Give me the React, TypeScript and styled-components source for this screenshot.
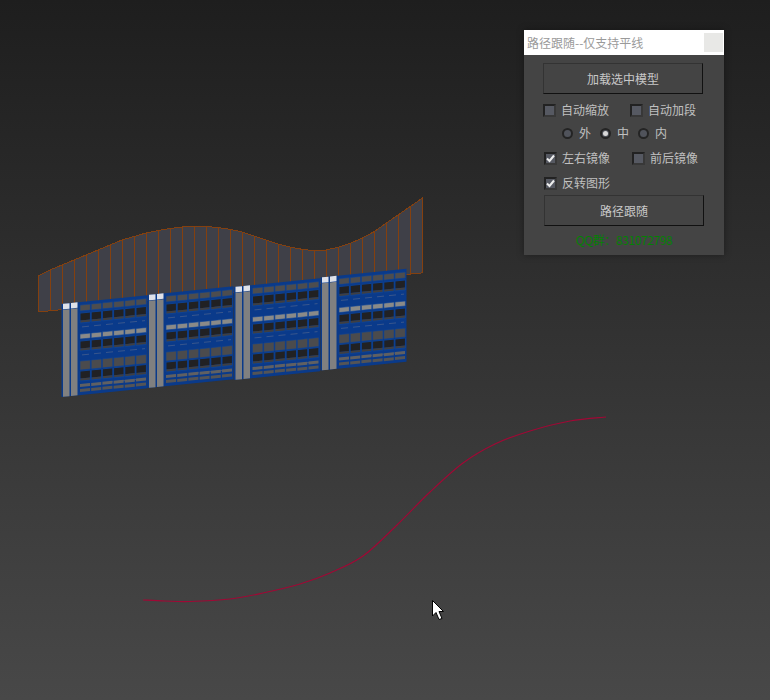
import React from 'react'
import styled, { createGlobalStyle } from 'styled-components'

const GlobalStyle = createGlobalStyle`
  html, body {
    margin: 0;
    padding: 0;
    background: #1e1e1e;
  }
`

const Viewport = styled.div`
  position: relative;
  width: 770px;
  height: 700px;
  overflow: hidden;
  background: linear-gradient(180deg, #1e1e1e 0%, #484848 100%);
  font-family: 'Noto Sans CJK SC', 'Liberation Sans', sans-serif;
`

const Scene = styled.svg`
  position: absolute;
  inset: 0;
  display: block;
`

const Dialog = styled.div`
  position: absolute;
  left: 524px;
  top: 30px;
  width: 200px;
  height: 225px;
  display: flex;
  flex-direction: column;
  background: #444444;
  box-shadow: 0 0 7px rgba(0, 0, 0, 0.35);
`

const TitleBar = styled.div`
  height: 25px;
  flex: none;
  display: flex;
  align-items: center;
  justify-content: space-between;
  padding: 0 1px 0 3px;
  background: #ffffff;
  color: #9a9a9a;
  font-size: 12px;
`

const CloseBox = styled.div`
  width: 19px;
  height: 19px;
  background: #e8e8e6;
`

const Body = styled.div`
  flex: 1;
  display: flex;
  flex-direction: column;
  padding: 8px 0 0 19px;
`

const ActionButton = styled.button<{ $offset?: number; $top?: number }>`
  width: 160px;
  height: 31px;
  margin-left: ${p => p.$offset ?? 0}px;
  margin-top: ${p => p.$top ?? 0}px;
  padding: 0;
  background: #444444;
  border: 1px solid #333333;
  border-right-color: #111111;
  border-bottom-color: #111111;
  color: #c8c8c8;
  font-family: inherit;
  font-size: 12px;
`

const OptionRow = styled.div<{ $top: number; $offset?: number }>`
  display: flex;
  align-items: center;
  height: 14px;
  margin-top: ${p => p.$top}px;
  margin-left: ${p => p.$offset ?? 0}px;
`

const CheckItem = styled.label<{ $width?: number }>`
  display: flex;
  align-items: center;
  gap: 5px;
  width: ${p => (p.$width ? `${p.$width}px` : 'auto')};
  color: #c0c0c0;
  font-size: 12px;
  line-height: 14px;
`

const CheckBox = styled.span`
  box-sizing: border-box;
  width: 13px;
  height: 13px;
  display: flex;
  align-items: center;
  justify-content: center;
  background: #565962;
  border: 2px solid #222222;
  border-right-color: #383838;
  border-bottom-color: #383838;
`

const RadioItem = styled.label`
  display: flex;
  align-items: center;
  gap: 6px;
  width: 38px;
  color: #c0c0c0;
  font-size: 12px;
  line-height: 14px;
`

const RadioDot = styled.span<{ $on?: boolean }>`
  box-sizing: border-box;
  width: 11px;
  height: 11px;
  border-radius: 50%;
  display: flex;
  align-items: center;
  justify-content: center;
  background: #50535b;
  border: 2px solid #242424;

  &::after {
    content: '';
    width: 5px;
    height: 5px;
    border-radius: 50%;
    background: ${p => (p.$on ? '#d8d8d8' : 'transparent')};
  }
`

const Contact = styled.div`
  margin-top: 6px;
  margin-left: 1px;
  height: 16px;
  line-height: 16px;
  text-align: center;
  width: 160px;
  color: #058005;
  font-size: 12px;
  letter-spacing: -0.4px;
`

// top edge of the swept wall, one y per rib, x = 38 + 12 * i
const wallTop = [
  276, 270, 265, 260, 255, 250, 245, 240, 236.5, 233, 230.5, 228.5, 227, 226.5, 226.5, 227.5,
  229.3, 232, 236, 240, 244, 247, 249.3, 250.7, 250, 247.3, 243.3, 238.3, 231.7, 223.3, 215,
  206.7, 198.3
]
const ribX = (i: number) => 38 + 12 * i
const wallBottom = (x: number) => 312 - (x - 38) * 0.1018

const wallOutline = () => {
  const top = wallTop.map((y, i) => `${ribX(i)},${y}`).join(' ')
  return `${top} 422,${wallBottom(422)} 38,312`
}

const modules = [
  { x: 61, y: 307 },
  { x: 147, y: 298 },
  { x: 233.5, y: 290 },
  { x: 320, y: 280.5 }
]
const columns = [0, 1, 2, 3, 4, 5]
const BLUE = '#0a3a8a'
const FRAME = '#0c4296'
const RIB = '#84400f'

function WindowRow({ y, band, bandY, bandH }: { y: number; band: string; bandY: number; bandH: number }) {
  return (
    <>
      {columns.map(c => (
        <g key={c}>
          <rect x={19 + c * 11.2} y={bandY} width={10.4} height={bandH} fill={band} stroke={FRAME} strokeWidth={0.6} />
          <rect x={19 + c * 11.2} y={y} width={10.4} height={7.5} fill="#212123" />
          <rect x={19 + c * 11.2} y={y + 7.5} width={10.4} height={2.5} fill="#3f3f42" />
          <rect x={19 + c * 11.2} y={y} width={10.4} height={10} fill="none" stroke={FRAME} strokeWidth={0.9} />
        </g>
      ))}
      <line x1={21} y1={y + 14} x2={84} y2={y + 14} stroke="#4a618e" strokeWidth={0.7} strokeDasharray="7 5" />
    </>
  )
}

function FacadeModule({ x, y }: { x: number; y: number }) {
  return (
    <g transform={`translate(${x} ${y}) skewY(-5.7)`}>
      <rect x={0.5} y={-3} width={86} height={93} fill={BLUE} />
      <rect x={2} y={3} width={6.5} height={87} fill="#808080" />
      <rect x={10} y={3} width={6.5} height={87} fill="#808080" />
      <rect x={2} y={-3} width={6.5} height={5.5} fill="#dfe1e8" />
      <rect x={10} y={-3} width={6.5} height={5.5} fill="#dfe1e8" />
      <WindowRow y={8} band="#4d4d4f" bandY={0} bandH={6} />
      <WindowRow y={36} band="#8a8a88" bandY={29} bandH={5} />
      <WindowRow y={66} band="#4b4b4d" bandY={56} bandH={9} />
      {columns.map(c => (
        <g key={c}>
          <rect x={19 + c * 11.2} y={79} width={10} height={3} fill="#606062" />
          <rect x={19 + c * 11.2} y={84} width={10} height={3} fill="#545456" />
        </g>
      ))}
    </g>
  )
}

// smooth line through the points read off the reference spline
const splinePoints = [
  [143, 600], [165, 601], [190, 601.5], [230, 599], [263, 593], [300, 584], [330, 573], [363, 556],
  [397, 525], [430, 492], [463, 463], [495, 444], [530, 431], [570, 421], [606, 417]
]
const splinePath = () => {
  let d = `M${splinePoints[0][0]} ${splinePoints[0][1]}`
  for (let i = 0; i < splinePoints.length - 1; i++) {
    const p0 = splinePoints[Math.max(i - 1, 0)]
    const p1 = splinePoints[i]
    const p2 = splinePoints[i + 1]
    const p3 = splinePoints[Math.min(i + 2, splinePoints.length - 1)]
    const c1x = p1[0] + (p2[0] - p0[0]) / 6
    const c1y = p1[1] + (p2[1] - p0[1]) / 6
    const c2x = p2[0] - (p3[0] - p1[0]) / 6
    const c2y = p2[1] - (p3[1] - p1[1]) / 6
    d += ` C${c1x} ${c1y} ${c2x} ${c2y} ${p2[0]} ${p2[1]}`
  }
  return d
}

function SceneArt() {
  return (
    <Scene width={770} height={700} viewBox="0 0 770 700">
      <polygon points={wallOutline()} fill="#3f4048" stroke={RIB} strokeWidth={1} shapeRendering="crispEdges" />
      {wallTop.map((y, i) => (
        <line
          key={i}
          x1={ribX(i) + 0.5}
          y1={y}
          x2={ribX(i) + 0.5}
          y2={wallBottom(ribX(i))}
          stroke={RIB}
          strokeWidth={1}
          shapeRendering="crispEdges"
        />
      ))}
      {modules.map(m => (
        <FacadeModule key={m.x} x={m.x} y={m.y} />
      ))}
      <path d={splinePath()} fill="none" stroke="#a00835" strokeWidth={1.2} />
      <path
        d="M432.5 600.5 L432.5 616 L436 612.5 L439 619.5 L442 618.5 L439 611.5 L443.5 611.5 Z"
        fill="#ffffff"
        stroke="#000000"
        strokeWidth={1}
      />
    </Scene>
  )
}

function Tick() {
  return (
    <svg width={9} height={9} viewBox="0 0 9 9">
      <path d="M1 4.5 L3.5 7 L8 1.5" fill="none" stroke="#eeeeee" strokeWidth={2} />
    </svg>
  )
}

function Check({ label, checked, width }: { label: string; checked?: boolean; width?: number }) {
  return (
    <CheckItem $width={width}>
      <CheckBox>{checked && <Tick />}</CheckBox>
      {label}
    </CheckItem>
  )
}

export default function App() {
  return (
    <Viewport>
      <GlobalStyle />
      <SceneArt />
      <Dialog>
        <TitleBar>
          路径跟随--仅支持平线
          <CloseBox />
        </TitleBar>
        <Body>
          <ActionButton>加载选中模型</ActionButton>
          <OptionRow $top={9}>
            <Check label="自动缩放" width={87} />
            <Check label="自动加段" />
          </OptionRow>
          <OptionRow $top={9} $offset={19}>
            <RadioItem>
              <RadioDot />外
            </RadioItem>
            <RadioItem>
              <RadioDot $on />中
            </RadioItem>
            <RadioItem>
              <RadioDot />内
            </RadioItem>
          </OptionRow>
          <OptionRow $top={11} $offset={1}>
            <Check label="左右镜像" checked width={88} />
            <Check label="前后镜像" />
          </OptionRow>
          <OptionRow $top={11} $offset={1}>
            <Check label="反转图形" checked />
          </OptionRow>
          <ActionButton $offset={1} $top={5}>
            路径跟随
          </ActionButton>
          <Contact>QQ群：831072798</Contact>
        </Body>
      </Dialog>
    </Viewport>
  )
}
